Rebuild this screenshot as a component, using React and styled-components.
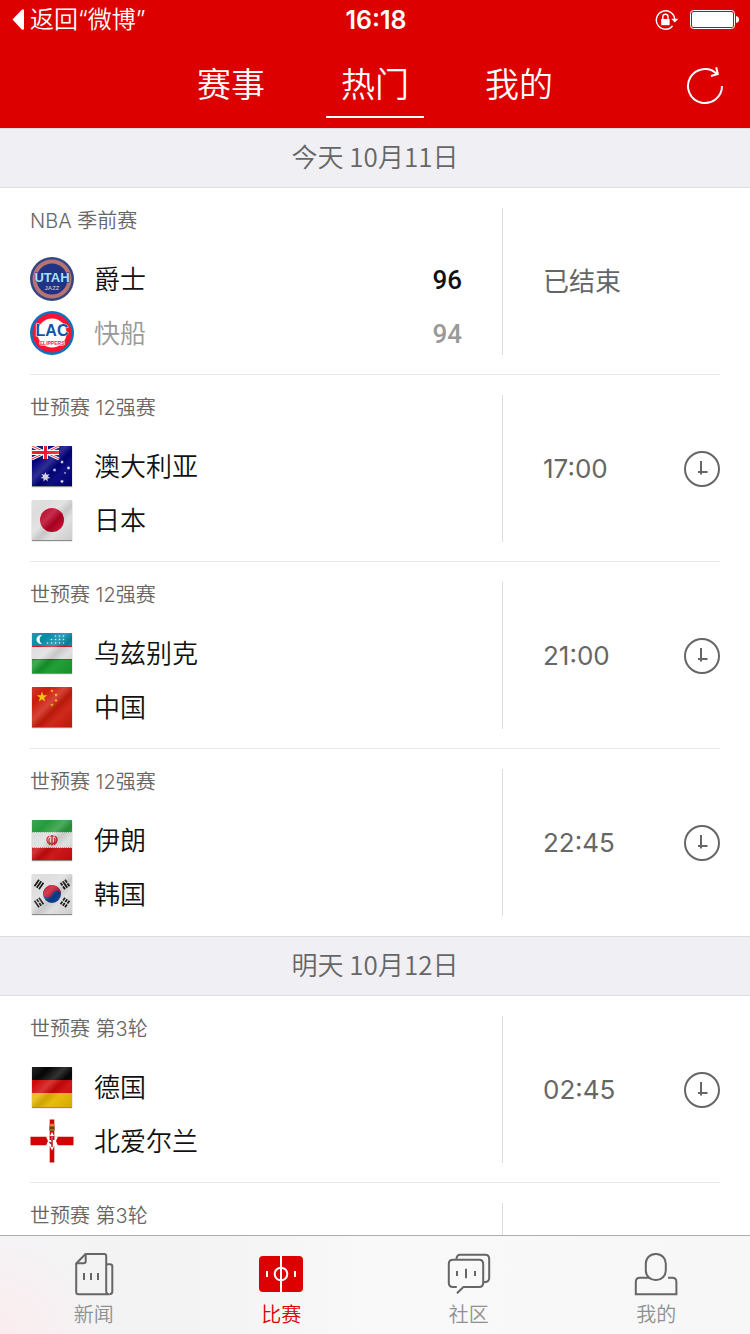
import React, { useState } from "react";
import styled, { createGlobalStyle, css } from "styled-components";

const days = [
  {
    id: "today",
    title: "今天 10月11日",
    matches: [
      {
        id: 1,
        league: "NBA 季前赛",
        status: "已结束",
        finished: true,
        teams: [
          { name: "爵士", logo: "utah", score: 96 },
          { name: "快船", logo: "lac", score: 94, lost: true },
        ],
      },
      {
        id: 2,
        league: "世预赛 12强赛",
        status: "17:00",
        teams: [
          { name: "澳大利亚", logo: "australia" },
          { name: "日本", logo: "japan" },
        ],
      },
      {
        id: 3,
        league: "世预赛 12强赛",
        status: "21:00",
        teams: [
          { name: "乌兹别克", logo: "uzbekistan" },
          { name: "中国", logo: "china" },
        ],
      },
      {
        id: 4,
        league: "世预赛 12强赛",
        status: "22:45",
        teams: [
          { name: "伊朗", logo: "iran" },
          { name: "韩国", logo: "korea" },
        ],
      },
    ],
  },
  {
    id: "tomorrow",
    title: "明天 10月12日",
    matches: [
      {
        id: 5,
        league: "世预赛 第3轮",
        status: "02:45",
        teams: [
          { name: "德国", logo: "germany" },
          { name: "北爱尔兰", logo: "northernIreland" },
        ],
      },
      { id: 6, league: "世预赛 第3轮", teams: [] },
    ],
  },
];

const starPoints = (cx, cy, r, count = 5, inner = 0.4) => {
  const points = [];
  for (let i = 0; i < count * 2; i++) {
    const radius = i % 2 ? r * inner : r;
    const angle = (Math.PI * i) / count - Math.PI / 2;
    points.push(
      `${(cx + radius * Math.cos(angle)).toFixed(2)},${(
        cy +
        radius * Math.sin(angle)
      ).toFixed(2)}`
    );
  }
  return points.join(" ");
};

const Star = ({ x, y, r, count, inner, fill }) => (
  <polygon points={starPoints(x, y, r, count, inner)} fill={fill} />
);

/* three bars of a Korean trigram, "1" is a whole bar and "0" a broken one */
const Trigram = ({ x, y, angle, bars }) => (
  <g transform={`translate(${x} ${y}) rotate(${angle})`} stroke="#111" strokeWidth="1.7">
    {bars.split("").map((bar, i) => (
      <line
        key={i}
        x1="-4"
        x2="4"
        y1={(i - 1) * 2.7}
        y2={(i - 1) * 2.7}
        strokeDasharray={bar === "1" ? "none" : "3.5 1"}
      />
    ))}
  </g>
);

const flags = {
  australia: (
    <>
      <rect width="40" height="40" fill="#00007c" />
      <rect width="27" height="13" fill="#00107c" />
      <path d="M0 0L27 13M27 0L0 13" stroke="#fff" strokeWidth="3" />
      <path d="M0 0L27 13M27 0L0 13" stroke="#e8202e" strokeWidth="1" />
      <path d="M13.5 0V13M0 6.5H27" stroke="#fff" strokeWidth="5" />
      <path d="M13.5 0V13M0 6.5H27" stroke="#ef1521" strokeWidth="3" />
      <Star x={13.5} y={31} r={5} count={7} inner={0.5} fill="#e4e4f4" />
      <Star x={30} y={16} r={2} count={7} inner={0.5} fill="#e4e4f4" />
      <Star x={22.5} y={24} r={2} count={7} inner={0.5} fill="#e4e4f4" />
      <Star x={36.5} y={22} r={2} count={7} inner={0.5} fill="#e4e4f4" />
      <Star x={30} y={35.5} r={2} count={7} inner={0.5} fill="#e4e4f4" />
      <Star x={33} y={27} r={1.2} fill="#e4e4f4" />
    </>
  ),
  japan: (
    <>
      <rect width="40" height="40" fill="#ddd" />
      <circle cx="20" cy="20" r="12" fill="#b90025" />
    </>
  ),
  uzbekistan: (
    <>
      <rect width="40" height="40" fill="#dedede" />
      <rect width="40" height="13" fill="#0889a8" />
      <rect y="27" width="40" height="13" fill="#169a2c" />
      <path d="M0 13.5H40M0 26.5H40" stroke="#d3122a" />
      <path d="M10 2A4.6 4.6 0 1 0 10 11A5.4 5.4 0 0 1 10 2Z" fill="#fff" />
      <g fill="#d8f2f5">
        {[
          [24, 3], [28, 3], [32, 3],
          [20, 6.5], [24, 6.5], [28, 6.5], [32, 6.5],
          [16, 10], [20, 10], [24, 10], [28, 10], [32, 10],
        ].map(([x, y]) => (
          <circle key={`${x}-${y}`} cx={x - 0.5} cy={y} r="0.8" />
        ))}
      </g>
    </>
  ),
  china: (
    <>
      <rect width="40" height="40" fill="#cc1c0c" />
      <Star x={10} y={10} r={5.5} fill="#f0c400" />
      <Star x={20} y={4} r={2} fill="#f0b400" />
      <Star x={24} y={8} r={2} fill="#f0b400" />
      <Star x={24} y={13.5} r={2} fill="#f0b400" />
      <Star x={20} y={18} r={2} fill="#f0b400" />
    </>
  ),
  iran: (
    <>
      <rect width="40" height="40" fill="#dedede" />
      <rect width="40" height="12" fill="#269a3c" />
      <rect y="28" width="40" height="12" fill="#c90c10" />
      <path d="M0 12.5H40" stroke="#8fcb9a" strokeDasharray="1 1" />
      <path d="M0 27.5H40" stroke="#df7d7d" strokeDasharray="1 1" />
      <g fill="none" stroke="#d41b20" strokeWidth="1.4">
        <path d="M20 15V25.5M18.4 16.6Q20 14.6 21.6 16.6" />
        <path d="M17.3 16C13.8 18 14.3 22.6 18 24.6" />
        <path d="M22.7 16C26.2 18 25.7 22.6 22 24.6" />
        <path d="M17.5 18C16.4 20.5 17.2 23 19.4 24.5M22.5 18C23.6 20.5 22.8 23 20.6 24.5" />
      </g>
    </>
  ),
  korea: (
    <>
      <rect width="40" height="40" fill="#dedede" />
      <circle cx="20" cy="20" r="9" fill="#0c3d8f" />
      <path
        d="M11 20A9 9 0 0 1 29 20A4.5 4.5 0 0 0 20 20A4.5 4.5 0 0 1 11 20Z"
        transform="rotate(12 20 20)"
        fill="#c9122c"
      />
      <Trigram x={7} y={10.5} angle={-56} bars="111" />
      <Trigram x={33} y={10.5} angle={56} bars="010" />
      <Trigram x={7} y={28.5} angle={56} bars="101" />
      <Trigram x={33} y={28.5} angle={-56} bars="000" />
    </>
  ),
  germany: (
    <>
      <rect width="40" height="14" fill="#060606" />
      <rect y="13" width="40" height="14" fill="#cf0808" />
      <rect y="26" width="40" height="14" fill="#e6b800" />
    </>
  ),
};

const TeamLogo = ({ logo }) => {
  if (logo === "utah") {
    return (
      <Emblem viewBox="0 0 44 44" aria-hidden="true">
        <circle cx="22" cy="22" r="22" fill="#344684" />
        <circle cx="22" cy="22" r="19.5" fill="#b87470" />
        <circle cx="22" cy="22" r="15.5" fill="#203384" />
        <EmblemText x="22" y="25" $size={13} fill="#a6e2fc" stroke="#203384">UTAH</EmblemText>
        <EmblemText x="22" y="33" $size={6} fill="#c9aeb6">JAZZ</EmblemText>
      </Emblem>
    );
  }
  if (logo === "lac") {
    return (
      <Emblem viewBox="0 0 44 44" aria-hidden="true">
        <circle cx="22" cy="22" r="22" fill="#0874bd" />
        <circle cx="22" cy="22" r="19.5" fill="#ff1230" />
        <circle cx="22" cy="22" r="14.5" fill="#fff" />
        <EmblemText x="22" y="25" $size={16} fill="#0755b0" stroke="#fff">LAC</EmblemText>
        <EmblemText x="22" y="34" $size={5} fill="#e82740" stroke="#fff">CLIPPERS</EmblemText>
      </Emblem>
    );
  }
  if (logo === "northernIreland") {
    return (
      <Emblem viewBox="0 0 44 44" aria-hidden="true">
        <path d="M22 0.5V43.5" stroke="#cf0606" strokeWidth="4.6" />
        <path d="M0.5 22H43.5" stroke="#cf0606" strokeWidth="8.4" />
        <path
          d="M22 13L24.2 17.2L28 17.5L26 22L28 26.5L24.2 27L22 31.5L19.8 27L16 26.5L18 22L16 17.5L19.8 17.2Z"
          fill="#fff"
        />
        <path d="M22 17V28M20.3 17V21M23.7 17V21M19.4 23L22 25.5" stroke="#bd1420" strokeWidth="1.5" />
        <path d="M19.5 7H24.5V11.5Q22 13.5 19.5 11.5Z" fill="#6b3d12" />
        <path d="M19.4 5.8L22 4.6L24.6 5.8V7.6H19.4Z" fill="#df8b20" />
        <path d="M20 11H24" stroke="#c9a33a" />
      </Emblem>
    );
  }
  return (
    <FlagFrame>
      <Flag viewBox="0 0 40 40" aria-hidden="true">
        {flags[logo]}
      </Flag>
    </FlagFrame>
  );
};

const NewsIcon = () => (
  <TabIcon viewBox="0 0 44 44" aria-hidden="true">
    <path d="M13.5 2H32.2Q34.2 2 34.2 4V39.5Q34.2 42.2 37 42.2H6.5Q4.2 42.2 4.2 40V11.5Z" />
    <path d="M4.2 11.2H11.7Q13.7 11.2 13.7 9.2V2" />
    <path d="M34.2 12.2H38Q40.3 12.2 40.3 14.5V39.4Q40.3 42.2 37.3 42.2" />
    <path d="M12 21V28M19 21V28M26 21V28" />
  </TabIcon>
);

const MatchIcon = () => (
  <TabIcon viewBox="0 0 44 44" aria-hidden="true">
    <rect y="4" width="44" height="36" rx="4" fill="#dd0000" stroke="none" />
    <path d="M22 4V40M8 19V25M36 19V25" stroke="#fff" />
    <circle cx="22" cy="22" r="6.3" stroke="#fff" />
  </TabIcon>
);

const CommunityIcon = () => (
  <TabIcon viewBox="0 0 44 44" aria-hidden="true">
    <path d="M9.4 7.8Q9.6 2.8 13 2.8H38Q42.2 2.8 42.2 7V26Q42.2 30.2 36.5 30.3" />
    <path d="M9.8 35H6Q1.8 35 1.8 30.8V12Q1.8 7.8 6 7.8H32Q36.2 7.8 36.2 12V30.8Q36.2 35 32 35H16.4L10 41.3" />
    <path d="M10 19V24M19 16.8V26.2M28 19V24" />
  </TabIcon>
);

const ProfileIcon = () => (
  <TabIcon viewBox="0 0 44 44" aria-hidden="true">
    <rect x="11.8" y="1.9" width="20" height="26.2" rx="9.6" />
    <path d="M15.2 25.8H6Q1.8 25.8 1.8 30V42.2H42.4V30Q42.4 25.8 38.2 25.8H34" />
  </TabIcon>
);

const StatusBar = () => (
  <StatusRow>
    <BackLink href="#weibo">
      <svg width="12" height="22" viewBox="0 0 12 22" aria-hidden="true">
        <path d="M0.5 10.5L9.5 0.9Q12 -0.6 12 1.6V19.6Q12 21.8 9.5 20.2Z" fill="#fff" />
      </svg>
      返回“微博”
    </BackLink>
    <Clock>16:18</Clock>
    <StatusIcons>
      <svg width="24" height="22" viewBox="0 0 24 22" aria-hidden="true">
        <path d="M19.7 10A9.2 9.2 0 1 0 17.6 17" fill="none" stroke="#fff" strokeWidth="1.4" />
        <path d="M16.2 9.8H23.4L19.8 13.6Z" fill="#fff" />
        <rect x="6.2" y="10" width="8.4" height="6.2" fill="#fff" />
        <path d="M7.8 10V7.8A2.6 2.6 0 0 1 13 7.8V10" fill="none" stroke="#fff" strokeWidth="1.4" />
      </svg>
      <svg width="50" height="20" viewBox="0 0 50 20" aria-hidden="true">
        <rect x="0.5" y="0.5" width="44" height="18" rx="3" fill="none" stroke="#fff" />
        <rect x="2" y="2" width="41" height="15" rx="1.5" fill="#fff" />
        <path d="M46 6Q49 6.5 49 9.5T46 13Z" fill="#fff" />
      </svg>
    </StatusIcons>
  </StatusRow>
);

const Match = ({ match }) => {
  const { league, status, finished, teams } = match;

  return (
    <MatchBox>
      <Sides>
        <League>{league}</League>
        {teams.map((team) => (
          <Team key={team.name} $lost={team.lost}>
            <TeamLogo logo={team.logo} />
            <TeamName>{team.name}</TeamName>
            {team.score && <Score>{team.score}</Score>}
          </Team>
        ))}
      </Sides>
      <StatusCell>
        {status && <Status>{status}</Status>}
        {status && !finished && (
          <RemindButton type="button" aria-label="提醒">
            <svg width="36" height="36" viewBox="0 0 36 36" aria-hidden="true">
              <circle cx="18" cy="18" r="17" />
              <path d="M17 10V23.5M14 21H23.5" />
            </svg>
          </RemindButton>
        )}
      </StatusCell>
    </MatchBox>
  );
};

const topTabs = ["赛事", "热门", "我的"];

const bottomTabs = [
  { id: "news", label: "新闻", icon: <NewsIcon /> },
  { id: "match", label: "比赛", icon: <MatchIcon />, active: true },
  { id: "community", label: "社区", icon: <CommunityIcon /> },
  { id: "profile", label: "我的", icon: <ProfileIcon /> },
];

const App = () => {
  const [current, setCurrent] = useState("热门");

  return (
    <Page>
      <GlobalStyle />
      <Header>
        <StatusBar />
        <NavRow>
          <TopTabs>
            {topTabs.map((tab) => (
              <TopTab
                key={tab}
                type="button"
                $active={tab === current}
                onClick={() => setCurrent(tab)}
              >
                {tab}
              </TopTab>
            ))}
          </TopTabs>
          <RefreshButton type="button" aria-label="刷新">
            <svg width="40" height="40" viewBox="0 0 40 40" aria-hidden="true">
              <path d="M37 21A17 17 0 1 1 32 9" />
              <path d="M31.2 2.2L32.8 9L26 11" />
            </svg>
          </RefreshButton>
        </NavRow>
      </Header>
      <Schedule>
        {days.map((day) => (
          <section key={day.id}>
            <DayTitle>{day.title}</DayTitle>
            {day.matches.map((match) => (
              <Match key={match.id} match={match} />
            ))}
          </section>
        ))}
      </Schedule>
      <TabBar>
        {bottomTabs.map(({ id, label, icon, active }) => (
          <TabLink key={id} href={`#${id}`} $active={active}>
            {icon}
            {label}
          </TabLink>
        ))}
      </TabBar>
    </Page>
  );
};

const GlobalStyle = createGlobalStyle`
  * {
    box-sizing: border-box;
  }
  body {
    margin: 0;
    background: #fff;
    font-family: Inter, "Noto Sans CJK SC", sans-serif;
    font-weight: 350;
  }
  button {
    padding: 0;
    border: 0;
    background: none;
    font: inherit;
    color: inherit;
    cursor: pointer;
  }
  a {
    color: inherit;
    text-decoration: none;
  }
  svg {
    display: block;
    flex: none;
  }
`;

const Page = styled.div`
  display: flex;
  flex-direction: column;
  height: 100vh;
`;

const Header = styled.header`
  flex: none;
  background: #dd0000;
  color: #fff;
`;

const StatusRow = styled.div`
  display: grid;
  grid-template-columns: 1fr auto 1fr;
  align-items: center;
  height: 40px;
  padding: 0 10px 0 12px;
`;

const BackLink = styled.a`
  display: flex;
  align-items: center;
  gap: 6px;
  font-size: 24px;
  line-height: 32px;
`;

const Clock = styled.span`
  font-size: 25px;
  font-weight: 600;
`;

const StatusIcons = styled.div`
  display: flex;
  align-items: center;
  justify-content: flex-end;
  gap: 11px;
`;

const NavRow = styled.div`
  display: grid;
  grid-template-columns: 1fr auto 1fr;
  height: 88px;
  padding: 12px 25px 10px;
`;

const TopTabs = styled.nav`
  grid-column: 2;
  display: flex;
  gap: 46px;
`;

const TopTab = styled.button`
  width: 98px;
  padding-top: 2px;
  border-bottom: 2px solid transparent;
  font-size: 34px;
  line-height: 62px;
  ${({ $active }) =>
    $active &&
    css`
      border-color: #fff;
    `}
`;

const RefreshButton = styled.button`
  align-self: center;
  justify-self: end;

  path {
    fill: none;
    stroke: #fff;
    stroke-width: 2;
  }
`;

const Schedule = styled.main`
  flex: 1;
  min-height: 0;
  overflow-y: auto;
  scrollbar-width: none;
`;

const DayTitle = styled.h2`
  margin: 0;
  height: 60px;
  border: solid #dcdcde;
  border-width: 1px 0;
  background: #efeff4;
  color: #666;
  font-family: "Noto Sans CJK SC", sans-serif;
  font-size: 26px;
  font-weight: 350;
  line-height: 54px;
  text-align: center;
`;

const MatchBox = styled.article`
  display: flex;
  min-height: 187px;
  margin: 0 30px;
  padding: 20px 0 19px;
  border-bottom: 1px solid #e9e9e9;

  &:last-child {
    border-bottom-color: transparent;
  }
`;

const Sides = styled.div`
  flex: 1;
  display: flex;
  flex-direction: column;
  gap: 10px;
  padding-right: 40px;
`;

const League = styled.h3`
  margin: 0 0 13px;
  color: #666;
  font-size: 20px;
  font-weight: 350;
  line-height: 26px;
`;

const Team = styled.div`
  display: flex;
  align-items: center;
  gap: 20px;
  height: 44px;
  color: ${({ $lost }) => ($lost ? "#999" : "#111")};
`;

const TeamName = styled.span`
  flex: 1;
  padding-top: 2px;
  font-size: 26px;
  line-height: 32px;
`;

const Score = styled.span`
  padding-top: 2px;
  font-family: Roboto, sans-serif;
  font-size: 26px;
  font-weight: 500;
  line-height: 32px;
`;

const Emblem = styled.svg`
  width: 44px;
  height: 44px;
`;

const EmblemText = styled.text`
  font-family: "Liberation Sans", sans-serif;
  font-size: ${({ $size }) => $size}px;
  font-weight: 700;
  text-anchor: middle;
  paint-order: stroke;
`;

const FlagFrame = styled.div`
  position: relative;
  margin: 2px;
  box-shadow: 0 1px 1px rgba(0, 0, 0, 0.45);

  &::after {
    content: "";
    position: absolute;
    inset: 0;
    background: linear-gradient(
      135deg,
      rgba(255, 255, 255, 0.12) 0%,
      rgba(255, 255, 255, 0) 22%,
      rgba(255, 255, 255, 0.18) 42%,
      rgba(0, 0, 0, 0.1) 56%,
      rgba(255, 255, 255, 0.06) 70%,
      rgba(0, 0, 0, 0.08) 100%
    );
  }
`;

const Flag = styled.svg`
  width: 40px;
  height: 40px;
`;

const StatusCell = styled.div`
  display: flex;
  align-items: center;
  justify-content: space-between;
  width: 218px;
  padding-left: 40px;
  border-left: 1px solid #dcdcdc;
  color: #666;
`;

const Status = styled.span`
  font-size: 26px;
  font-weight: 400;
  line-height: 32px;
`;

const RemindButton = styled.button`
  circle,
  path {
    fill: none;
    stroke: #666;
    stroke-width: 2;
  }
`;

const TabBar = styled.nav`
  flex: none;
  display: grid;
  grid-template-columns: repeat(4, 1fr);
  height: 99px;
  padding-top: 16px;
  border-top: 1px solid #adadad;
  background: radial-gradient(circle at 0 100%, #fbecee 0, rgba(251, 236, 238, 0) 100px),
    linear-gradient(90deg, #f4f3f5 0%, #f3f3f3 26%, #f9f9f9 50%, #f7f7f7 100%);
`;

const TabLink = styled.a`
  display: flex;
  flex-direction: column;
  align-items: center;
  gap: 7px;
  color: ${({ $active }) => ($active ? "#dd0000" : "#909090")};
  font-size: 20px;
  line-height: 24px;
`;

const TabIcon = styled.svg`
  width: 44px;
  height: 44px;
  fill: none;
  stroke: #666;
  stroke-width: 2;
`;

export default App;
